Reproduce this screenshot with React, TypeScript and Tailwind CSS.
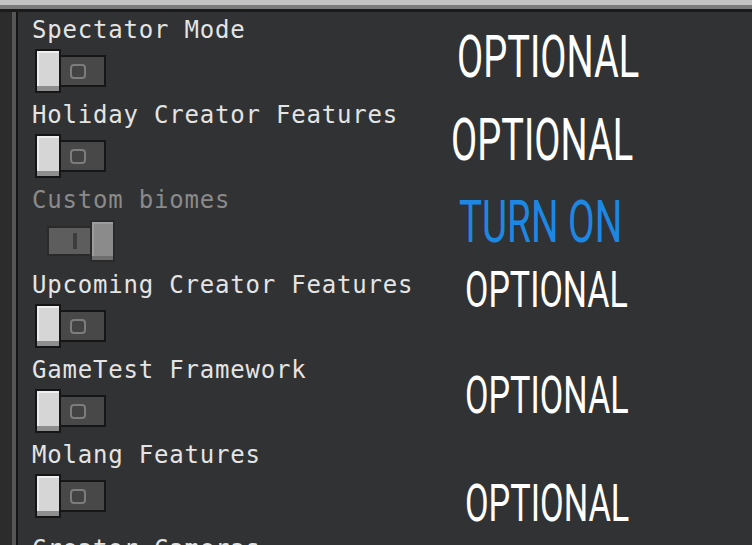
import React from "react";

const mono = { fontFamily: '"DejaVu Sans Mono", "Liberation Mono", monospace' };

function OffToggle() {
  return (
    <div className="flex h-[44px] items-center pl-[17px]">
      <div className="h-[44px] w-[26px] border-2 border-[#161616] bg-[#d6d6d6] shadow-[inset_0_-5px_0_#8e8e8e,inset_2px_2px_0_#eeeeee]" />
      <div className="flex h-[32px] w-[45px] items-center border-2 border-l-0 border-[#161616] bg-[#484848] pl-[9px]">
        <div className="h-[15px] w-[16px] rounded-[4px] border-2 border-[#7c7c7c] bg-[#434343]" />
      </div>
    </div>
  );
}

function OnDisabledToggle() {
  return (
    <div className="flex h-[44px] items-center pl-[29px]">
      <div className="flex h-[30px] w-[45px] items-center border-2 border-[#2a2a2a] bg-[#5d5d5d] pl-[24px]">
        <div className="h-[16px] w-[4px] bg-[#3d3d3d]" />
      </div>
      <div className="-ml-[2px] h-[42px] w-[25px] border-2 border-[#2a2a2a] bg-[#8b8b8b] shadow-[inset_0_-4px_0_#6e6e6e,inset_2px_2px_0_#9c9c9c]" />
    </div>
  );
}

function Row({ label, disabled, on, last }: { label: string; disabled?: boolean; on?: boolean; last?: boolean }) {
  return (
    <div className={`flex h-[85px] shrink-0 flex-col ${last ? "pt-[9px]" : ""}`}>
      <div
        className={`h-[24px] whitespace-nowrap pl-[14px] text-[24px] leading-[24px] tracking-[0.8px] ${
          disabled ? "text-[#8a8a8a]" : "text-[#e4e4e4]"
        }`}
        style={mono}
      >
        {label}
      </div>
      {!last && <div className="mt-[7px]">{on ? <OnDisabledToggle /> : <OffToggle />}</div>}
    </div>
  );
}

const ann = { fontFamily: 'Roboto, "DejaVu Sans", sans-serif' };

export default function App() {
  return (
    <div className="relative flex h-[545px] w-[752px] flex-col overflow-hidden bg-[#313233]">
      <div className="h-[5px] shrink-0 bg-[#c3c3c3]" />
      <div className="h-[4px] shrink-0 bg-[#7b7b7b]" />
      <div className="h-[3px] shrink-0 bg-[#1b1b1b]" />
      <div className="flex flex-1">
        <div className="w-[12px] shrink-0 bg-[#2c2c2c]" />
        <div className="w-[4px] shrink-0 bg-[#565656]" />
        <div className="w-[2px] shrink-0 bg-[#151515]" />
        <div className="flex flex-1 flex-col bg-[#313233] pt-[6px]">
          <Row label="Spectator Mode" />
          <Row label="Holiday Creator Features" />
          <Row label="Custom biomes" disabled on />
          <Row label="Upcoming Creator Features" />
          <Row label="GameTest Framework" />
          <Row label="Molang Features" />
          <Row label="Creator Cameras" last />
        </div>
      </div>

      <div className="pointer-events-none absolute left-[457px] top-[27px] origin-left scale-x-[0.645] whitespace-nowrap text-[59px] font-normal leading-none text-white" style={ann}>
        OPTIONAL
      </div>
      <div className="pointer-events-none absolute left-[451px] top-[110px] origin-left scale-x-[0.645] whitespace-nowrap text-[59px] font-normal leading-none text-white" style={ann}>
        OPTIONAL
      </div>
      <div className="pointer-events-none absolute left-[459px] top-[192px] origin-left scale-x-[0.655] whitespace-nowrap text-[59px] font-normal leading-none text-[#1d87e4]" style={ann}>
        TURN ON
      </div>
      <div className="pointer-events-none absolute left-[465px] top-[265px] origin-left scale-x-[0.68] whitespace-nowrap text-[50px] font-normal leading-none text-white" style={ann}>
        OPTIONAL
      </div>
      <div className="pointer-events-none absolute left-[465px] top-[370px] origin-left scale-x-[0.67] whitespace-nowrap text-[51px] font-normal leading-none text-white" style={ann}>
        OPTIONAL
      </div>
      <div className="pointer-events-none absolute left-[465px] top-[478px] origin-left scale-x-[0.66] whitespace-nowrap text-[52px] font-normal leading-none text-white" style={ann}>
        OPTIONAL
      </div>
    </div>
  );
}
